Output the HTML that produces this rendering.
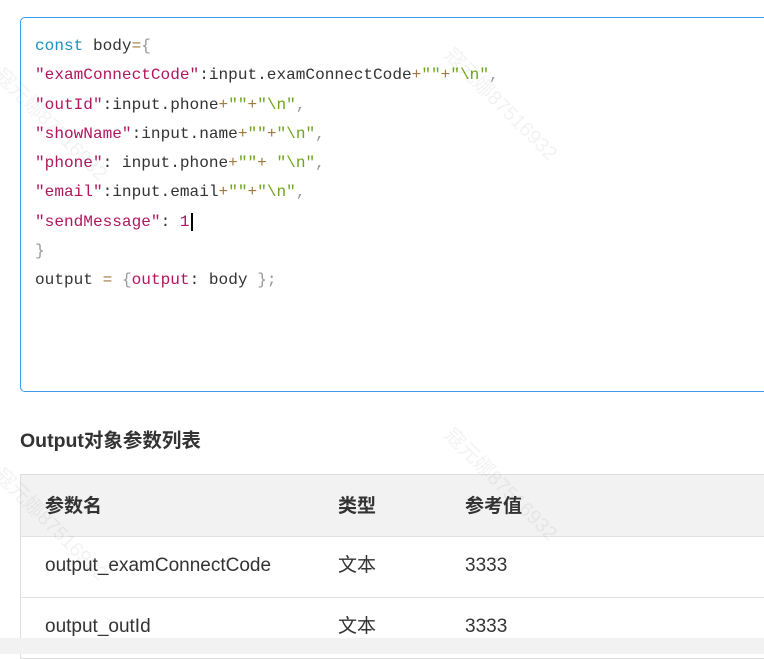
<!DOCTYPE html>
<html><head><meta charset="utf-8"><style>
body{margin:0;width:764px;height:654px;overflow:hidden;background:#fff;position:relative;font-family:"Liberation Sans","Noto Sans CJK SC",sans-serif}
.card{position:absolute;left:20px;top:17px;width:780px;height:375px;border:1px solid #3d9be9;border-radius:5px;box-sizing:border-box}
.code{position:absolute;left:35px;top:32px;font-family:"Liberation Mono","Noto Sans CJK SC",monospace;font-size:16.1px;line-height:29.3px;color:#333;white-space:pre}
.k{color:#1a8fc0}.s{color:#b0165e}.p{color:#a0793d}.g{color:#6fa51a}.b{color:#999}
h3{position:absolute;left:20px;top:424px;margin:0;font-size:19.5px;font-weight:bold;color:#333}
.tbl{position:absolute;left:20px;top:474px;width:760px;border:1px solid #ddd;border-right:none;box-sizing:border-box}
.row{height:60px;position:relative;border-top:1px solid #e2e2e2;font-size:19px;color:#333}
.row:first-child{border-top:none;background:#f2f2f2;font-weight:bold;height:61px}
.row span{position:absolute;top:0;line-height:58px;height:60px}
.row:first-child span{line-height:63px}
.c1{left:24px}.c2{left:317px}.c3{left:444px}
.foot{position:absolute;left:0;top:638px;width:764px;height:16px;background:#f2f2f2;z-index:5}
.wm{position:absolute;color:rgba(0,0,0,0.05);font-size:20px;transform:rotate(45deg);transform-origin:left top;white-space:nowrap}
</style></head><body>
<div class="card"></div>
<div class="code"><span class="k">const</span> body<span class="p">=</span><span class="b">{</span>
<span class="s">"examConnectCode"</span>:input.examConnectCode<span class="p">+</span><span class="g">""</span><span class="p">+</span><span class="g">"\n"</span><span class="b">,</span>
<span class="s">"outId"</span>:input.phone<span class="p">+</span><span class="g">""</span><span class="p">+</span><span class="g">"\n"</span><span class="b">,</span>
<span class="s">"showName"</span>:input.name<span class="p">+</span><span class="g">""</span><span class="p">+</span><span class="g">"\n"</span><span class="b">,</span>
<span class="s">"phone"</span>: input.phone<span class="p">+</span><span class="g">""</span><span class="p">+</span> <span class="g">"\n"</span><span class="b">,</span>
<span class="s">"email"</span>:input.email<span class="p">+</span><span class="g">""</span><span class="p">+</span><span class="g">"\n"</span><span class="b">,</span>
<span class="s">"sendMessage"</span>: <span class="s">1</span><span style="border-left:2px solid #000;margin-left:1px"></span>
<span class="b">}</span>
output <span class="p">=</span> <span class="b">{</span><span class="s">output</span>: body <span class="b">};</span></div>
<h3>Output对象参数列表</h3>
<div class="tbl">
<div class="row"><span class="c1">参数名</span><span class="c2">类型</span><span class="c3">参考值</span></div>
<div class="row"><span class="c1">output_examConnectCode</span><span class="c2">文本</span><span class="c3">3333</span></div>
<div class="row"><span class="c1">output_outId</span><span class="c2">文本</span><span class="c3">3333</span></div>
</div>
<div class="foot"></div>
<div class="wm" style="left:10px;top:60px">寇元娜87516932</div>
<div class="wm" style="left:460px;top:40px">寇元娜87516932</div>
<div class="wm" style="left:10px;top:460px">寇元娜87516932</div>
<div class="wm" style="left:460px;top:420px">寇元娜87516932</div>
</body></html>
